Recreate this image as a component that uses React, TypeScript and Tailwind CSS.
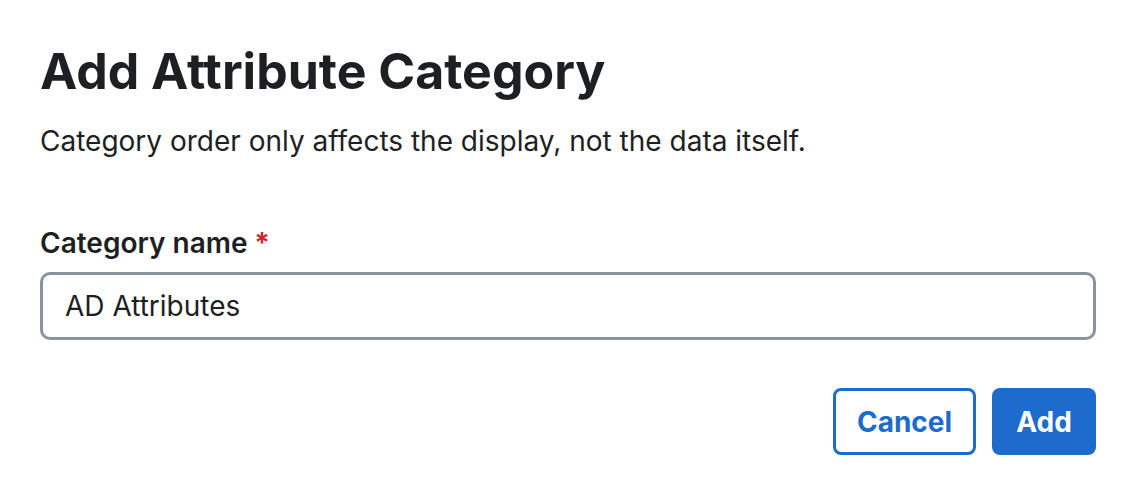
export default function App() {
  return (
    <div className="w-[1130px] h-[496px] bg-white pl-[40px] pr-[34px] pt-[41px]" style={{ fontFamily: 'Inter, "Noto Sans", sans-serif' }}>
      <h1 className="text-[50px] leading-[60px] font-bold text-[#1d1f23]">Add Attribute Category</h1>
      <p className="mt-[22px] text-[28px] leading-[36px] text-[#1d1f23]">Category order only affects the display, not the data itself.</p>
      <div className="mt-[66px]">
        <label className="block text-[28px] leading-[36px] font-semibold text-[#1d1f23]">
          Category name <span className="text-[#d3202c]">*</span>
        </label>
        <div className="mt-[11px] h-[68px] w-full rounded-[10px] border-[3px] border-[#8c939c] flex items-center px-[22px] text-[28px] leading-[36px] text-[#1d1f23]">
          AD Attributes
        </div>
      </div>
      <div className="mt-[48px] flex justify-end gap-[16px]">
        <button className="h-[67px] w-[143px] rounded-[8px] border-[3px] border-[#1d6bcc] text-[#1d6bcc] text-[28px] font-bold">Cancel</button>
        <button className="h-[67px] w-[104px] rounded-[8px] bg-[#1d6bcc] text-white text-[28px] font-bold">Add</button>
      </div>
    </div>
  );
}
